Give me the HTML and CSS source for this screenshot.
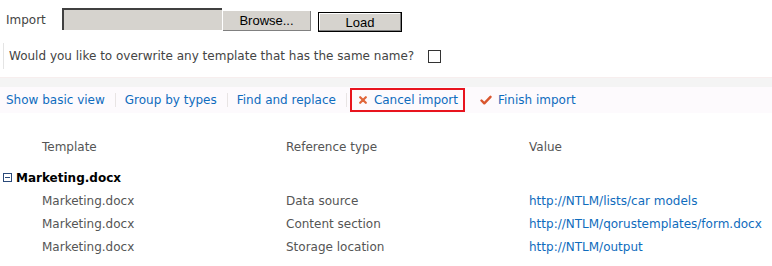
FILE: index.html
```html
<!DOCTYPE html>
<html lang="en">
<head>
    <meta charset="UTF-8">
    <title>Import templates</title>
    <link rel="stylesheet" href="styles.css">
</head>
<body>
    <!-- 가져오기 영역 -->
    <div class="import-row">
        <span class="import-label">Import</span>
        <span class="file-box"></span>
        <button class="classic-button browse-button">Browse...</button>
        <button class="classic-button load-button">Load</button>
    </div>
    <div class="overwrite-row">
        <span>Would you like to overwrite any template that has the same name?</span>
        <span class="check-box"></span>
    </div>

    <div class="gray-band"></div>

    <!-- 툴바 -->
    <div class="toolbar">
        <a class="tool-link">Show basic view</a>
        <span class="tool-sep"></span>
        <a class="tool-link">Group by types</a>
        <span class="tool-sep"></span>
        <a class="tool-link">Find and replace</a>
        <span class="tool-sep"></span>
        <a class="tool-link cancel-link">
            <svg width="8" height="8" viewBox="0 0 8 8">
                <path d="M1.2 1.2 L6.8 6.8 M6.8 1.2 L1.2 6.8" stroke="#e0663a" stroke-width="2.2" stroke-linecap="round"/>
            </svg>
            Cancel import
        </a>
        <a class="tool-link finish-link">
            <svg width="12" height="10" viewBox="0 0 12 10">
                <path d="M1.5 5.5 L4.3 8.3 L10.5 1.8" fill="none" stroke="#d9562e" stroke-width="2.4" stroke-linecap="round" stroke-linejoin="round"/>
            </svg>
            Finish import
        </a>
    </div>

    <!-- 결과 표 -->
    <div class="grid">
        <div class="grid-head">
            <span class="col-template">Template</span>
            <span class="col-type">Reference type</span>
            <span class="col-value">Value</span>
        </div>
        <div class="group-row">
            <span class="collapse-icon">
                <svg width="9" height="9" viewBox="0 0 9 9">
                    <rect x="0.5" y="0.5" width="8" height="8" fill="#fff" stroke="#2b4a7a"/>
                    <path d="M2 4.5 H7" stroke="#2b4a7a"/>
                </svg>
            </span>
            <span class="group-name">Marketing.docx</span>
        </div>
        <div class="grid-row">
            <span class="col-template">Marketing.docx</span>
            <span class="col-type">Data source</span>
            <a class="col-value">http://NTLM/lists/car models</a>
        </div>
        <div class="grid-row">
            <span class="col-template">Marketing.docx</span>
            <span class="col-type">Content section</span>
            <a class="col-value">http://NTLM/qorustemplates/form.docx</a>
        </div>
        <div class="grid-row">
            <span class="col-template">Marketing.docx</span>
            <span class="col-type">Storage location</span>
            <a class="col-value">http://NTLM/output</a>
        </div>
    </div>
</body>
</html>
```

FILE: styles.css
```css
/* 기본 설정 */
body {
    margin: 0;
    width: 772px;
    height: 266px;
    overflow: hidden;
    background-color: #fff;
    font-family: "DejaVu Sans", Verdana, sans-serif;
    font-size: 12px;
    color: #444;
}

/* 가져오기 줄 */
.import-row {
    display: flex;
    align-items: center;
    height: 24px;
    padding-top: 8px;
    padding-left: 6px;
}

.import-label {
    width: 56px;
}

.file-box {
    width: 158px;
    height: 20px;
    background-color: #d6d3ce;
    border-top: 2px solid #404040;
    border-left: 2px solid #404040;
    align-self: flex-start;
}

.classic-button {
    font-family: "Liberation Sans", Arial, sans-serif;
    font-size: 13px;
    color: #000;
    background-color: #d6d3ce;
    padding: 0;
    height: 20px;
}

.browse-button {
    width: 88px;
    border: none;
    border-right: 1px solid #808080;
    border-bottom: 1px solid #808080;
    margin-left: 1px;
    margin-top: 2px;
}

.load-button {
    width: 84px;
    margin-left: 7px;
    margin-top: 4px;
    border: 1px solid #000;
    box-shadow: inset -1px -1px 0 #808080, inset 1px 1px 0 #fff;
}

/* 덮어쓰기 줄 */
.overwrite-row {
    display: flex;
    align-items: center;
    margin-top: 11px;
    margin-left: 3px;
    padding-left: 5px;
    height: 26px;
    border-left: 1px solid #e4e4e4;
}

.check-box {
    width: 11px;
    height: 11px;
    border: 1px solid #333;
    margin-left: 14px;
}

.gray-band {
    margin-top: 8px;
    height: 9px;
    border-top: 1px solid #f7eeee;
    background-color: #f4f4f4;
}

/* 툴바 */
.toolbar {
    display: flex;
    align-items: center;
    height: 26px;
    background-color: #fdfafd;
    padding-left: 6px;
}

.tool-link {
    color: #0f6cbd;
    display: flex;
    align-items: center;
    gap: 6px;
}

.tool-sep {
    width: 1px;
    height: 14px;
    background-color: #e8e4e4;
    margin: 0 9px 0 10px;
}

.cancel-link {
    height: 20px;
    padding: 0 5px 0 7px;
    gap: 7px;
    border: 2px solid #e8141e;
    margin-left: -6px;
}

.finish-link {
    margin-left: 15px;
}

/* 표 */
.grid {
    margin-top: 22px;
}

.grid-head,
.grid-row {
    display: flex;
    align-items: center;
    height: 23px;
    color: #555;
}

.grid-head {
    margin-bottom: 8px;
}

.col-template {
    width: 244px;
    padding-left: 42px;
}

.col-type {
    width: 243px;
}

.col-value {
    color: #0f6cbd;
}

.grid-head .col-value {
    color: #555;
}

.group-row {
    display: flex;
    align-items: center;
    height: 23px;
    padding-left: 3px;
}

.collapse-icon {
    display: flex;
    margin-right: 4px;
}

.group-name {
    font-weight: bold;
    color: #000;
}
```
